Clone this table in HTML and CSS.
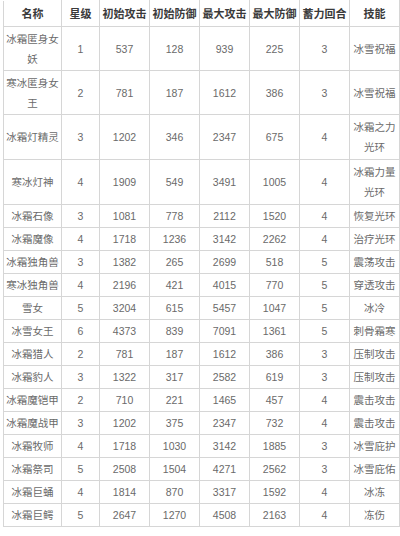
FILE: index.html
```html
<!DOCTYPE html>
<html lang="zh">
<head>
<meta charset="utf-8">
<link rel="stylesheet" href="styles.css">
</head>
<body>
<table class="grid">
<colgroup>
<col class="c-name"><col class="c-star"><col class="c-n"><col class="c-n"><col class="c-n"><col class="c-n"><col class="c-n"><col class="c-skill">
</colgroup>
<thead>
<tr><th>名称</th><th>星级</th><th>初始攻击</th><th>初始防御</th><th>最大攻击</th><th>最大防御</th><th>蓄力回合</th><th>技能</th></tr>
</thead>
<tbody>
<tr class="tall"><td>冰霜匿身女妖</td><td>1</td><td>537</td><td>128</td><td>939</td><td>225</td><td>3</td><td>冰雪祝福</td></tr>
<tr class="tall"><td>寒冰匿身女王</td><td>2</td><td>781</td><td>187</td><td>1612</td><td>386</td><td>3</td><td>冰雪祝福</td></tr>
<tr class="tall2"><td>冰霜灯精灵</td><td>3</td><td>1202</td><td>346</td><td>2347</td><td>675</td><td>4</td><td>冰霜之力光环</td></tr>
<tr class="tall2"><td>寒冰灯神</td><td>4</td><td>1909</td><td>549</td><td>3491</td><td>1005</td><td>4</td><td>冰霜力量光环</td></tr>
<tr><td>冰霜石像</td><td>3</td><td>1081</td><td>778</td><td>2112</td><td>1520</td><td>4</td><td>恢复光环</td></tr>
<tr><td>冰霜魔像</td><td>4</td><td>1718</td><td>1236</td><td>3142</td><td>2262</td><td>4</td><td>治疗光环</td></tr>
<tr><td>冰霜独角兽</td><td>3</td><td>1382</td><td>265</td><td>2699</td><td>518</td><td>5</td><td>震荡攻击</td></tr>
<tr><td>寒冰独角兽</td><td>4</td><td>2196</td><td>421</td><td>4015</td><td>770</td><td>5</td><td>穿透攻击</td></tr>
<tr><td>雪女</td><td>5</td><td>3204</td><td>615</td><td>5457</td><td>1047</td><td>5</td><td>冰冷</td></tr>
<tr><td>冰雪女王</td><td>6</td><td>4373</td><td>839</td><td>7091</td><td>1361</td><td>5</td><td>刺骨霜寒</td></tr>
<tr><td>冰霜猎人</td><td>2</td><td>781</td><td>187</td><td>1612</td><td>386</td><td>3</td><td>压制攻击</td></tr>
<tr><td>冰霜豹人</td><td>3</td><td>1322</td><td>317</td><td>2582</td><td>619</td><td>3</td><td>压制攻击</td></tr>
<tr><td>冰霜魔铠甲</td><td>2</td><td>710</td><td>221</td><td>1465</td><td>457</td><td>4</td><td>震击攻击</td></tr>
<tr><td>冰霜魔战甲</td><td>3</td><td>1202</td><td>375</td><td>2347</td><td>732</td><td>4</td><td>震击攻击</td></tr>
<tr><td>冰霜牧师</td><td>4</td><td>1718</td><td>1030</td><td>3142</td><td>1885</td><td>3</td><td>冰雪庇护</td></tr>
<tr><td>冰霜祭司</td><td>5</td><td>2508</td><td>1504</td><td>4271</td><td>2562</td><td>3</td><td>冰雪庇佑</td></tr>
<tr><td>冰霜巨蛹</td><td>4</td><td>1814</td><td>870</td><td>3317</td><td>1592</td><td>4</td><td>冰冻</td></tr>
<tr><td>冰霜巨鳄</td><td>5</td><td>2647</td><td>1270</td><td>4508</td><td>2163</td><td>4</td><td>冻伤</td></tr>
</tbody>
</table>
</body>
</html>
```
FILE: styles.css
```css
html, body {
  margin: 0;
  padding: 0;
  background: #ffffff;
}
body {
  padding-left: 3px;
}
.grid {
  border-collapse: collapse;
  table-layout: fixed;
  width: 396px;
  font-family: "Liberation Sans", "Noto Sans CJK SC", sans-serif;
  font-size: 10.5px;
  color: #6a6a6a;
}
.c-name { width: 58px; }
.c-star { width: 38px; }
.c-n { width: 50px; }
.c-skill { width: 50px; }
.grid th, .grid td {
  border: 1px solid #d6d6d6;
  text-align: center;
  vertical-align: middle;
  padding: 1px 2px;
  line-height: 20px;
}
.grid th {
  font-size: 11px;
  font-weight: bold;
  color: #3a3a3a;
  white-space: nowrap;
  height: 23px;
  padding: 1px 0;
  border-top-color: #ffffff;
}
.grid td {
  height: 20px;
}
.grid tr.tall td { height: 41px; }
.grid tr.tall2 td { height: 42px; }
```
